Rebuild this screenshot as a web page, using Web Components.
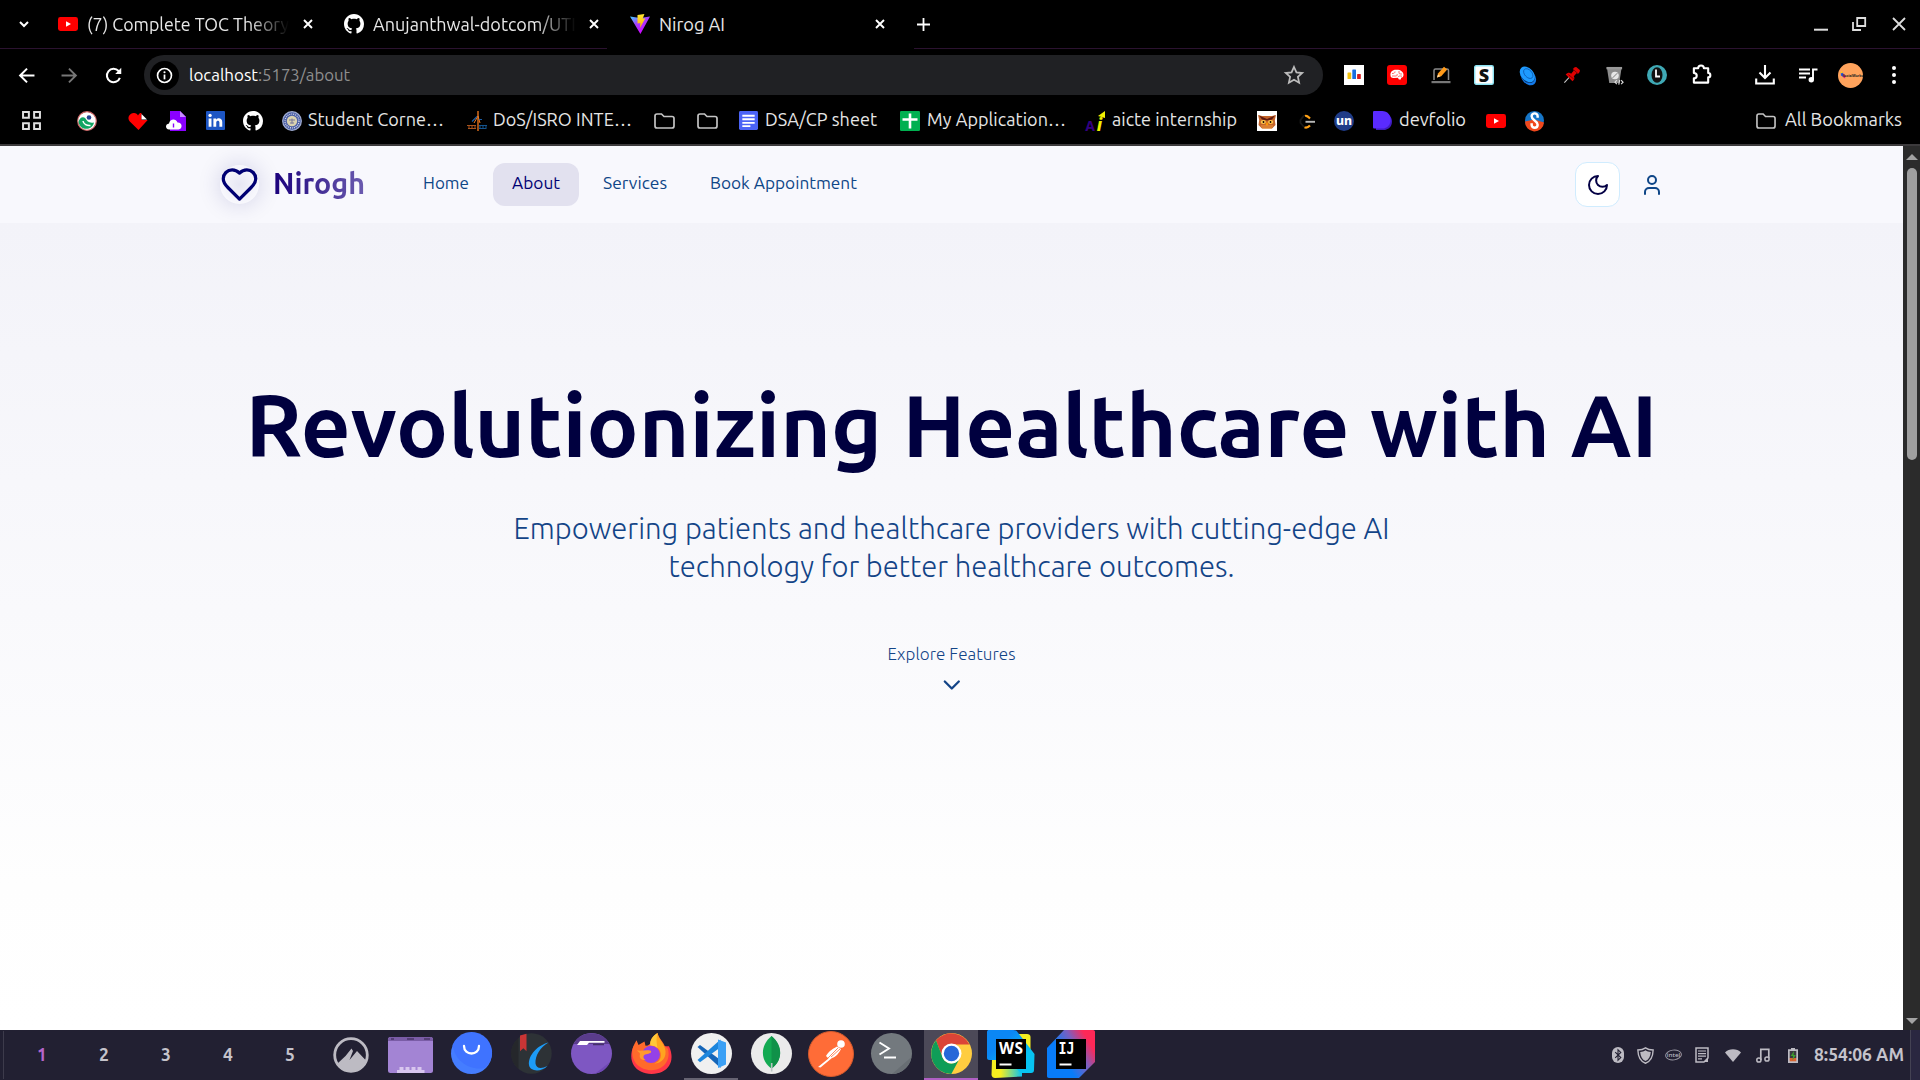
<!DOCTYPE html>
<html lang="en">
<head>
<meta charset="utf-8">
<title>Nirog AI</title>
<style>
html,body{margin:0;height:100%;overflow:hidden;background:#000}
body{font-family:Ubuntu,"Noto Sans",sans-serif}
</style>
</head>
<body>
<desk-screen></desk-screen>
<script>
const GH='<path fill="#fff" d="M8 0C3.58 0 0 3.58 0 8c0 3.54 2.29 6.53 5.47 7.59.4.07.55-.17.55-.38 0-.19-.01-.82-.01-1.49-2.01.37-2.53-.49-2.69-.94-.09-.23-.48-.94-.82-1.13-.28-.15-.68-.52-.01-.53.63-.01 1.08.58 1.23.82.72 1.21 1.87.87 2.33.66.07-.52.28-.87.51-1.07-1.78-.2-3.64-.89-3.64-3.95 0-.87.31-1.59.82-2.15-.08-.2-.36-1.02.08-2.12 0 0 .67-.21 2.2.82.64-.18 1.32-.27 2-.27s1.36.09 2 .27c1.53-1.04 2.2-.82 2.2-.82.44 1.1.16 1.92.08 2.12.51.56.82 1.27.82 2.15 0 3.07-1.87 3.75-3.65 3.95.29.25.54.73.54 1.48 0 1.07-.01 1.93-.01 2.2 0 .21.15.46.55.38A8.01 8.01 0 0 0 16 8c0-4.42-3.58-8-8-8z"/>';
const T=(x,y,s,f,t,w=700,extra='')=>`<text x="${x}" y="${y}" font-size="${s}" fill="${f}" font-weight="${w}" text-anchor="middle" style="font-family:'Noto Sans',sans-serif" ${extra}>${t}</text>`;
/* name: [viewBox, markup] */
const ICONS={
chev:['0 0 12 12','<path d="M2 4l4 4 4-4" fill="none" stroke="#fff" stroke-width="2"/>'],
yt:['0 0 20 14','<rect width="20" height="14" rx="2.4" fill="#f00"/><path d="M8 4.2v5.6L13 7z" fill="#fff"/>'],
gh:['0 0 16 16',GH],
vite:['0 0 20 20','<defs><linearGradient id="v" x1="0" y1="0" x2=".6" y2="1"><stop stop-color="#41d1ff"/><stop offset=".45" stop-color="#a340ff"/><stop offset="1" stop-color="#d400ff"/></linearGradient><linearGradient id="z" x1="0" y1="0" x2="0" y2="1"><stop stop-color="#ffea30"/><stop offset="1" stop-color="#ffa800"/></linearGradient></defs><path d="M0 2.5L10 4l10-1.5L10.4 20z" fill="url(#v)"/><path d="M7.5 1L14.4 0l-1.7 4.8 2.7-.5L9.9 14l.5-5-2.9.5z" fill="url(#z)"/>'],
x:['0 0 12 12','<path d="M2 2l8 8M10 2l-8 8" stroke="#fff" stroke-width="1.9"/>'],
plus:['0 0 13 13','<path d="M6.5 0v13M0 6.5h13" stroke="#fff" stroke-width="1.8"/>'],
min:['0 0 14 14','<path d="M0 12.7h14" stroke="#ddd" stroke-width="2"/>'],
restore:['0 0 14 14','<path d="M5.2 1h8v8h-8zM1 5v8h8" fill="none" stroke="#ddd" stroke-width="1.8"/>'],
close:['0 0 14 14','<path d="M1 1l12 12M13 1L1 13" stroke="#ddd" stroke-width="1.8"/>'],
back:['0 0 16 16','<path d="M15.5 8H2M8.5 1.5L2 8l6.500 6.500" fill="none" stroke="#fff" stroke-width="1.9"/>'],
fwd:['0 0 16 16','<path d="M.5 8H14M7.500 1.500L14 8l-6.500 6.500" fill="none" stroke="#777" stroke-width="1.800"/>'],
reload:['0 0 16 16','<path d="M14 10.200A6.300 6.300 0 1 1 12.800 3.800L14 5" fill="none" stroke="#fff" stroke-width="1.900"/><path d="M15.300.8v5.700H9.600z" fill="#fff"/>'],
info:['0 0 30 30','<circle cx="15" cy="15" r="15" fill="#000"/><circle cx="15" cy="15" r="7.200" fill="none" stroke="#fff" stroke-width="1.700"/><path d="M15 14v5" stroke="#fff" stroke-width="1.800"/><circle cx="15" cy="11.600" r="1.100" fill="#fff"/>'],
star:['0 0 18 18','<path d="M9 1.800l2.200 4.800 5.200.6-3.900 3.500 1.100 5.200L9 13.300l-4.600 2.600 1.100-5.200L1.600 7.200l5.200-.6z" fill="none" stroke="#bbb" stroke-width="1.600"/>'],
bars:['0 0 20 20','<rect width="20" height="20" fill="#fff"/><rect x="3.500" y="7.500" width="3.700" height="6.500" rx=".6" fill="#f4c20d"/><rect x="8.300" y="4.500" width="3.700" height="9.500" rx=".6" fill="#1a6fe0"/><rect x="13.100" y="9" width="3.700" height="5" rx=".6" fill="#d81b1b"/>'],
brain:['0 0 20 20','<rect width="20" height="20" rx="3" fill="#f00"/><path d="M3.500 10.300C3 7 5.500 4.600 9 4.700c4-.4 7.500 1.800 7.500 5 0 1.800-1 3-2.300 3.100l-.5 1.800h-1.800l-1-1.800-4.500.3C4.300 13 3.500 12 3.500 10.300z" fill="#fff"/><path d="M5 8.500c2 0 3-.5 3-2M5 11h4c1 0 1.500-1 1-2M12 6v2c0 1 1.500 1 3 1M11 12c1-1.200 2-1.200 4-.8" fill="none" stroke="#f44" stroke-width=".8"/>'],
laptop:['0 0 20 20','<path d="M3 15V5.500C3 4.500 3.500 4 4.500 4H16c1 0 1.500.5 1.500 1.500V15" fill="none" stroke="#8a8a8a" stroke-width="1.500"/><path d="M.5 16h19v2.200h-19z" fill="#777"/><path d="M6 12.500l1.200-4.200L13 1.800l3.200 2.700-6 6.700z" fill="#ff9a1a"/><path d="M6 12.500l1-3.300 2.300 2z" fill="#ffd9a0"/>'],
sbox:['0 0 20 20','<rect x=".7" y=".7" width="18.600" height="18.600" rx="1.500" fill="#fff" stroke="#8de3f3" stroke-width="1.400"/>'+T(10,16.500,18,'#111','S',900)],
disc:['0 0 20 20','<ellipse cx="11" cy="12" rx="9.400" ry="6.800" transform="rotate(48 11 12)" fill="#1479e8"/><ellipse cx="10" cy="9.800" rx="9.200" ry="6.600" transform="rotate(48 10 9.800)" fill="#06306b"/><ellipse cx="9.800" cy="8.800" rx="9.400" ry="6.600" transform="rotate(48 9.800 8.800)" fill="#1e9bff"/><ellipse cx="10.800" cy="8" rx="6" ry="3.800" transform="rotate(48 10.800 8)" fill="none" stroke="#0b56ad" stroke-width=".8"/>'],
pin:['0 0 20 20','<path d="M1.500 18.500l5.500-6" stroke="#ccc" stroke-width="1.200"/><path d="M3 9.500c2-2.400 4.500-2.500 6-1L12 5l-1-1.500c1-1.800 2.700-2.600 4-2.200l3.700 3.200c.4 1.600-.5 3.200-2 4L15 8l-3 3.500c1.200 2 .8 4-1.500 5.500z" fill="#e00000"/><path d="M11 3.500L16.700 8.500M6 9.500l6 5" stroke="#700" stroke-width="1"/>'],
cup:['0 0 20 20','<path d="M2 1.500h15.500L15 18H4.500z" fill="#8c8c8c"/><path d="M1.500 1h16.500v2.500H1.500z" fill="#999"/><circle cx="10.500" cy="10" r="4" fill="#e6e6e6"/><path d="M8 12.500l5-5" stroke="#777" stroke-width="1"/><path d="M12.500 15l-2 2 2 2M17 15l2 2-2 2M15.500 14.500l-1 5" stroke="#ddd" fill="none" stroke-width="1.200"/>'],
teal:['0 0 20 20','<circle cx="10" cy="10" r="10" fill="#3fa9b5"/><ellipse cx="10" cy="10" rx="5.500" ry="7.800" fill="#111"/><path d="M9 4.500v7h4" fill="none" stroke="#fff" stroke-width="1.800"/>'],
puzzle:['0 0 22 22','<path d="M3 4.500h4.500c0-4 6-4 6 0H18v5c3 0 3 4.500 0 4.500v5.500H3V15c4 0 4-5.500 0-5.500z" fill="none" stroke="#fff" stroke-width="2.200" stroke-linejoin="round"/>'],
down:['0 0 20 20','<path d="M10 0v12M4.500 7.500L10 13l5.500-5.500M1.200 13.500v5h17.600v-5" fill="none" stroke="#fff" stroke-width="2.100"/>'],
queue:['0 0 20 18','<path d="M1 3.500h11M1 7.500h11M1 11.500h7" stroke="#fff" stroke-width="1.800"/><path d="M15 13.500V3.500h4.500" fill="none" stroke="#fff" stroke-width="1.900"/><circle cx="13.300" cy="13.800" r="2.700" fill="#fff"/>'],
avatar:['0 0 26 26','<circle cx="13" cy="13" r="13" fill="#ffa35c"/><path d="M3 9.500l2.500 1v4L3 13z" fill="#2b50d8"/><path d="M5.500 11.500l2 1v3.500l-2-1z" fill="#e02080"/><rect x="3" y="9" width="1.500" height="1.500" fill="#fd0"/>'+T(15.500,14.800,3.500,'#222','SocialWorks')],
dots:['0 0 6 20','<g fill="#fff"><circle cx="3" cy="3" r="2"/><circle cx="3" cy="10" r="2"/><circle cx="3" cy="17" r="2"/></g>'],
apps:['0 0 18 18','<path d="M1 1h5.500v5.500H1zM11.500 1H17v5.500h-5.500zM1 11.500h5.500V17H1zM11.500 11.500H17V17h-5.500z" fill="none" stroke="#e0e0e0" stroke-width="1.900"/>'],
swirl:['0 0 20 20','<circle cx="10" cy="10" r="9.300" fill="#fff" stroke="#c66" stroke-width="1.200"/><path d="M1.500 11C2.500 6 6.500 5 8.500 7.500c1.500 2.500 3.500 5 8.500 4-1.500 8-13.500 9-15.500-.5z" fill="#12a562"/><path d="M6 10c.5 3.300 4 5 7.500 4.500" stroke="#fff" stroke-width="1.500" fill="none"/><circle cx="12" cy="6.500" r="2.300" fill="#25408f"/>'],
heart:['0 0 20 20','<path d="M10.500 19L1.800 10.500C-1.500 6.500 2 1.800 6 2c2 0 3.400 1.200 4 2.500C11.500 2 12.500 2 13.500 2.200V9h6.200z" fill="#f00"/><path d="M13.500 3l5.500 5.500h-5.500z" fill="#fff"/>'],
purp:['0 0 20 20','<path d="M4 0h10l6 6v14H4z" fill="#8a00ff"/><path d="M14 0l6 6h-6z" fill="#c88cff"/><path d="M3 18.500c-4-.3-4-5.500 0-6 .8-5 7-5.500 8.500-1 5-.3 5.500 6.500 1 7z" fill="#fff"/><path d="M7.500 12.500v4" stroke="#8a00ff" stroke-width="1.400"/>'],
linkedin:['0 0 18 18','<rect width="18" height="18" rx="1" fill="#1d56c4"/><path d="M2.500 7h2.700v8H2.500zM7 7h2.600v1.200c1.500-2.200 5.800-1.800 5.800 2.200V15h-2.700v-4.200c0-2.200-3-2-3 0V15H7z" fill="#fff"/><circle cx="3.850" cy="4.200" r="1.600" fill="#fff"/>'],
seal:['0 0 20 20','<circle cx="10" cy="10" r="9.300" fill="#4a5fa5" stroke="#9fabd0" stroke-width="1.300"/><circle cx="10" cy="10" r="7" fill="none" stroke="#dde" stroke-width="1.200" stroke-dasharray="1 1"/><circle cx="10" cy="10" r="5.200" fill="#d9d2b0"/><path d="M7 9h6M10 7.500v5M8 12h4" stroke="#779" stroke-width="1"/>'],
isro:['0 0 20 20','<path d="M11 0v20" stroke="#f47b20" stroke-width="1.300"/><path d="M7 12l4-7 2 7" stroke="#f47b20" stroke-width="1" fill="none"/><path d="M5 10.500l5-5M12 8.500h3" stroke="#1b5fa8" stroke-width="1.100"/><path d="M0 14.500h9M1 17.500h8M2 14v3M5 14v4M8 14v4" stroke="#a9531c" stroke-width="1"/><path d="M12 14.500h8M12 17.500h7M13 14v4M16 14v3M19 14v4" stroke="#14548e" stroke-width="1"/>'],
folder:['0 0 21 16','<path d="M1 3c0-1.200.7-2 2-2h4.500l2.500 2.500h8c1.200 0 2 .8 2 2V13c0 1.200-.8 2-2 2H3c-1.200 0-2-.8-2-2z" fill="none" stroke="#c4c4c4" stroke-width="1.700"/>'],
docs:['0 0 20 20','<rect width="20" height="20" rx="1.500" fill="#4b63f5"/><path d="M3.500 5h13M3.500 8.700h13M3.500 12.400h13M3.500 16h8.500" stroke="#fff" stroke-width="1.900"/>'],
sheet:['0 0 20 20','<rect width="20" height="20" rx="1.200" fill="#00b050"/><path d="M10 2.500v15M2.500 8.500h15" stroke="#fff" stroke-width="2.600"/>'],
ai:['0 0 20 20',T(5,19.500,14,'#330080','A')+T(14.500,19.500,17,'#f0f000','i',800,'font-style="italic"')+'<path d="M20 0v7l-7-2z" fill="#f0f000"/>'],
owl:['0 0 20 20','<rect width="20" height="20" fill="#fff"/><path d="M1 4l4 1h10l4-1-1.200 5 .7 5-3.500 3.500h-10L1.500 14l.7-5z" fill="#c4642a"/><path d="M2 4.500l8 3.500 8-3.500L15 8.500l-5 1-5-1z" fill="#5e1a10"/><ellipse cx="6.300" cy="11" rx="2.600" ry="1.900" fill="#ffc94d"/><ellipse cx="13.700" cy="11" rx="2.600" ry="1.900" fill="#ffc94d"/><circle cx="6.500" cy="11" r=".9"/><circle cx="13.500" cy="11" r=".9"/><path d="M10 10.500l1.300 3L10 15l-1.300-1.500z" fill="#f90"/><path d="M4 15h12M5 17h10" stroke="#ef9a3c" stroke-width="1"/>'],
leet:['0 0 16 16','<path d="M5 2.500L1.500 7v3L5 14" fill="none" stroke="#181818" stroke-width="1.800"/><path d="M6 3c2-1 3 .5 5 2.500" fill="none" stroke="#ffa116" stroke-width="2.200"/><path d="M5.500 14.300c2 .9 3.500.3 5.500-1.800" fill="none" stroke="#ffa116" stroke-width="2.200"/><path d="M6.500 8.800h9.500" stroke="#b8b8b8" stroke-width="1.900"/>'],
un:['0 0 20 20','<circle cx="10" cy="10" r="10" fill="#1f3c88"/>'+T(10,13.800,12.200,'#fff','un',800)],
dev:['0 0 19 20','<path d="M3 2h7c12 0 12 18 0 18H3z" fill="#3f1cc0"/><path d="M0 1.500C0 .5.500 0 1.500 0H9c11.500 0 11.500 18.500 0 18.500H1.500C.5 18.500 0 18 0 17z" fill="#5a2bff"/>'],
stud:['0 0 20 20','<circle cx="10" cy="10" r="10" fill="#1676c8"/><path d="M0 11l10-2 10 3a10 10 0 0 1-20-1z" fill="#f0481c"/><path d="M13.300 7V5.500C13.300 1.500 7 1.500 7 5.500c0 4.500 6.300 4.500 6.300 9 0 4.200-6.300 4.200-6.300 0V13" fill="none" stroke="#fff" stroke-width="2.600"/>'],
nheart:['0 0 24 24','<path d="M19 14c1.490-1.460 3-3.210 3-5.500A5.500 5.500 0 0 0 16.500 3c-1.760 0-3 .5-4.500 2-1.500-1.500-2.740-2-4.500-2A5.500 5.500 0 0 0 2 8.500c0 2.300 1.500 4.050 3 5.500l7 7Z" fill="none" stroke="#000073" stroke-width="2" stroke-linejoin="round"/>'],
moon:['0 0 24 24','<path d="M12 3a6 6 0 0 0 9 9 9 9 0 1 1-9-9Z" fill="none" stroke="#030044" stroke-width="2" stroke-linecap="round" stroke-linejoin="round"/>'],
user:['0 0 24 24','<path d="M19 21v-2a4 4 0 0 0-4-4H9a4 4 0 0 0-4 4v2" fill="none" stroke="#0f4687" stroke-width="2" stroke-linecap="round"/><circle cx="12" cy="7" r="4" fill="none" stroke="#0f4687" stroke-width="2"/>'],
cdown:['0 0 24 24','<path d="M4.800 8.500l7 7 7-7" fill="none" stroke="#134487" stroke-width="2.300" stroke-linecap="round" stroke-linejoin="round"/>'],
up:['0 0 12 6','<path d="M0 6h12L6 0z" fill="#a3a3a3"/>'],
dn:['0 0 12 6','<path d="M0 0h12L6 6z" fill="#a3a3a3"/>'],
mount:['0 0 36 36','<circle cx="18" cy="18" r="16.300" fill="none" stroke="#bdbbc3" stroke-width="2.800"/><path d="M4 27l8.500-8 6-7.500 1.500 2.500-3.500 9L24 14l9 9.500C30 36 10 38 4 27z" fill="#bdbbc3"/>'],
dock:['0 0 45 36','<rect width="45" height="36" rx="2.500" fill="#a384d4"/><path d="M0 4V2.500C0 1 1 0 2.500 0h40C44 0 45 1 45 2.500V4z" fill="#7a5ca6"/><path d="M3 2h3M19 2h7M36 2h6" stroke="#493468" stroke-width="1.500"/><path d="M9 33h27.500v3H9zM11.500 30h4v3h-4zM17.500 30h4v3h-4zM23.500 30h4v3h-4zM29.500 30h4v3h-4z" fill="#d8c6ee"/>'],
bag:['0 0 41 41','<circle cx="20.500" cy="20.500" r="20.500" fill="#457dff"/><path d="M1.500 12C4 28 18 38 34 35A20.500 20.500 0 1 0 1.500 12z" fill="#3f73ff"/><path d="M13 13c0 10 15 10 15 0" fill="none" stroke="#fff" stroke-width="2.300" stroke-linecap="round"/>'],
cal:['0 0 41 41','<circle cx="20.500" cy="20.500" r="20.200" fill="#2d3236"/><path d="M0 20.500A20.500 20.500 0 0 1 7.500 5v31A20.500 20.500 0 0 1 0 20.500z" fill="#25272b"/><path d="M9 2.500L15.500.8v17.500l-3.200-3L9 18.300z" fill="#c93535"/><path d="M37.500 9.500C27 12 17 22 18 32c.8 6.500 12 7.500 18.500 1-7 3.500-11.500 2-12-2.500C24 23 29 14 37.500 9.500z" fill="#1d9bf6"/>'],
files:['0 0 41 41','<circle cx="20.500" cy="20.500" r="20.500" fill="#7e57c2"/><path d="M2.500 11a20.500 20.500 0 0 1 36 0z" fill="#5a3c8c"/><path d="M9 8h24.500v1.800H18l-2 2.200H6z" fill="#fff"/><path d="M22 11.500h11" stroke="#46306c" stroke-width="1.500"/><path d="M24 40.700L39 29a20.500 20.500 0 0 1-15 11.700z" fill="#7048b5"/>'],
fox:['0 0 41 43','<path d="M38 14c7 16-1 29-17.500 29S-4 29 2.500 14z" fill="#ff3647"/><path d="M5.500 7.500l2 5L13.500 9l1 4.500C22 13 20 5 26.500 0c1.500 6 4.500 7.500 6.500 12 1 3 3 2.500 4 5 3 12-5 22-16.500 22S-.5 30 1.500 17c.5-3 2-6 4-9.500z" fill="#ff6a2b"/><path d="M26.500 0c-5 3-8 8-7 13 7 0 12 6 10 13-1.500 5-6 6.500-9 6 10 1 16-6 13.500-16-2-6-6.500-10-7.500-16z" fill="#ffa51f"/><path d="M26.500 0c-5 3-8 8-7 13 3 0 5.500 1 7 3-1-6-1.500-11 0-16z" fill="#ffc83a"/><circle cx="20" cy="22.500" r="9" fill="#9441e8"/><path d="M6 18c4 1.500 8-1 14 .5 1 3-3 3-6 4-3 2-1 5 1 6-6 0-7-3.500-6-6.500 0-2-2-2-3-4z" fill="#ff9a2e"/>'],
code:['0 0 41 41','<circle cx="20.500" cy="20.500" r="20.500" fill="#f0f0f0"/><path d="M6.500 14L9 12l20.500 15v8z" fill="#1565b8"/><path d="M6.500 27L9 29.200l20.500-15V6.500z" fill="#1c86dd"/><path d="M27 6.500l8 3v22l-8 3.500z" fill="#3ba0f5"/>'],
mongo:['0 0 41 41','<circle cx="20.500" cy="20.500" r="20.500" fill="#ebebeb"/><path d="M20.500 3c12 10 11 25 0 32.500C9.500 28 8.500 13 20.500 3z" fill="#13aa52"/><path d="M20.500 3c12 10 11 25 0 32.500z" fill="#109149"/><path d="M20.700 30v8.500" stroke="#b8c4c2" stroke-width="1.600"/>'],
post:['0 0 46 46','<circle cx="23" cy="23" r="22.500" fill="#ff6c37" stroke="#d65a2c" stroke-width="1"/><circle cx="33" cy="13" r="3.800" fill="#fff"/><path d="M29 15.500c-6 3-9 6-11 9.500l2.500 2.500L10 36l2.500.5L24 27c4-1 7-5 9-9z" fill="#fff"/><path d="M30 17L20 27M32 18l-9 8" stroke="#ff6c37" stroke-width=".8"/>'],
term:['0 0 41 41','<circle cx="20.500" cy="20.500" r="20.500" fill="#73797e"/><path d="M21 41L40.500 24A20.500 20.500 0 0 1 21 41z" fill="#686e73"/><path d="M8.500 9.500l9.500 6-9.500 6" fill="none" stroke="#fff" stroke-width="1.900"/><path d="M13 24.500h12" stroke="#fff" stroke-width="2"/>'],
chrome:['0 0 41 41','<circle cx="20.500" cy="20.500" r="20.500" fill="#ffcd40"/><path d="M20.500 11.500h18A20.500 20.500 0 0 0 5 7.200l6.800 18z" fill="#db4437"/><path d="M5 7.200A20.500 20.500 0 0 0 20.300 41l8.500-15.700c-5 8-14 6-17-.4z" fill="#0f9d58"/><circle cx="20.500" cy="20.500" r="10" fill="#fff"/><circle cx="20.500" cy="20.500" r="7.700" fill="#2667d8"/>'],
ws:['0 0 48 48','<defs><linearGradient id="w" x1="0" y1="0" x2="1" y2="1"><stop offset=".3" stop-color="#0b87f5"/><stop offset=".7" stop-color="#07c3f2"/></linearGradient><linearGradient id="y" x1="0" y1="0" x2="1" y2="0"><stop offset=".3" stop-color="#f5ef20"/><stop offset="1" stop-color="#07c3f2"/></linearGradient></defs><path d="M28 4h12c2 0 3.500 1 3.500 3v17H28z" fill="#f5ef20"/><path d="M5 29h30v17.500L8 48c-2 0-3-1-3.500-3z" fill="url(#y)"/><path d="M0 2C0 .5 1 0 2 0h24c3 0 4 1 6 4l15.500 20-.5 16c0 2-1 3-3 3H34L20 30H2c-1 0-2-1-2-2z" fill="url(#w)"/><path d="M9 9h30v30H9z"/><path d="M12.500 34.500h12" stroke="#fff" stroke-width="2"/>'+T(24,24.200,15.500,'#fff','WS',700,'textLength="24"')],
ij:['0 0 48 48','<defs><linearGradient id="i" x1="0" y1=".7" x2="1" y2=".1"><stop offset=".3" stop-color="#087cfa"/><stop offset=".6" stop-color="#7a5fc0"/><stop offset=".85" stop-color="#fe2857"/></linearGradient></defs><path d="M17 0h29c1.500 0 2 1 2 2v30L32 48H2c-1.300 0-2-1-2-2V18z" fill="url(#i)"/><path d="M9 9h30v30H9z"/><path d="M12.500 34.500h12" stroke="#fff" stroke-width="2"/><text x="11.500" y="24.200" font-size="15.500" font-weight="700" fill="#fff" textLength="16" lengthAdjust="spacingAndGlyphs" style="font-family:\'DejaVu Sans Mono\',monospace">IJ</text>'],
bt:['0 0 12 16','<rect width="12" height="16" rx="6" fill="#bdbbc3"/><path d="M3.200 5.200l5.600 5.400L6 13.200V2.800l2.800 2.600-5.600 5.400" fill="none" stroke="#222032" stroke-width="1.100"/>'],
shield:['0 0 16 16','<path d="M8 .8c2 1.500 4.500 2 7.200 2C15 9 13 13.500 8 15.300 3 13.500 1 9 .8 2.800c2.700 0 5.200-.5 7.200-2z" fill="none" stroke="#bdbbc3" stroke-width="1.300"/><path d="M8 3c1.500 1 3 1.500 5 1.600C12.600 9 11 12 8 13.200 5 12 3.400 9 3 4.600 5 4.500 6.500 4 8 3z" fill="#bdbbc3"/>'],
intel:['0 0 16 12','<ellipse cx="8" cy="6" rx="7.500" ry="4.900" transform="rotate(-8 8 6)" fill="none" stroke="#9c9aa5" stroke-width=".9"/>'+T(8,8.100,6,'#bdbbc3','intel',500)],
note:['0 0 14 16','<path d="M1 1h12v10l-4 4H1z" fill="none" stroke="#bdbbc3" stroke-width="1.500"/><path d="M3 4h8M3 6.600h8M3 9.200h8M3 11.800h4" stroke="#bdbbc3" stroke-width="1.200"/><path d="M13 10.500V15L9 15z" fill="#bdbbc3"/>'],
wifi:['0 0 16 13','<path d="M0 3.500C4-.8 12-.8 16 3.500L8 13z" fill="#bdbbc3"/>'],
music:['0 0 14 15','<path d="M4.800 12V1.300h8V10" fill="none" stroke="#bdbbc3" stroke-width="1.700"/><circle cx="2.900" cy="12" r="2.100" fill="none" stroke="#bdbbc3" stroke-width="1.500"/><circle cx="11" cy="11" r="2.100" fill="none" stroke="#bdbbc3" stroke-width="1.500"/>'],
batt:['0 0 10 15','<path d="M3 0h4v1.200h3V15H0V1.200h3z" fill="#bdbbc3"/><path d="M1.700 3h6.600v7H1.700z" fill="#3b3940"/><path d="M1.700 10h6.600v3.300H1.700z" fill="#d9632f"/><path d="M6 3L2.700 8H5l-.5 4.500L7.800 7H5.500z" fill="#3fa02c"/>']
};
class UiIcon extends HTMLElement{
  constructor(){super();this.attachShadow({mode:'open'})}
  connectedCallback(){
    const [vb,m]=ICONS[this.getAttribute('name')];
    const w=this.getAttribute('w'),h=this.getAttribute('h')||w;
    this.shadowRoot.innerHTML=`<style>:host{display:block;flex:none;width:${w}px;height:${h}px}svg{display:block;width:100%;height:100%;overflow:visible}</style><svg viewBox="${vb}" preserveAspectRatio="none">${m}</svg>`;
  }
}
/* One line of text, sized and lightly tracked so that it fills the width given in "w". */
class FitText extends HTMLElement{
  constructor(){super();this.attachShadow({mode:'open'});
    this.shadowRoot.innerHTML='<style>:host{display:block;flex:none;white-space:nowrap}span{display:inline-block;vertical-align:top}</style><span><slot></slot></span>'}
  connectedCallback(){
    const w=+this.getAttribute('w'),s=this.shadowRoot.querySelector('span'),n=this.textContent.length;
    this.style.width=w+'px';
    const size=parseFloat(getComputedStyle(this).fontSize);
    const nat=s.getBoundingClientRect().width;
    if(!nat)return;
    s.style.fontSize=Math.round(size*w/nat*4)/4+'px';
    s.style.letterSpacing=((w-s.getBoundingClientRect().width)/n).toFixed(3)+'px';
  }
}
/* Flow items: ['i', left gap, name, width, height?, top nudge?] or ['t', left gap, width, text, class?] */
const flow=a=>a.map(o=>o[0]=='i'
 ?`<ui-icon name="${o[2]}" w="${o[3]}" h="${o[4]||o[3]}" style="margin-left:${o[1]}px;margin-top:${o[5]||0}px"></ui-icon>`
 :`<fit-text class="${o[4]||''}" w="${o[2]}" style="margin-left:${o[1]}px">${o[3]}</fit-text>`).join('');
const def=(name,html)=>customElements.define(name,class extends HTMLElement{
  constructor(){super();this.attachShadow({mode:'open'})}
  connectedCallback(){this.shadowRoot.innerHTML=html}
});
customElements.define('ui-icon',UiIcon);
customElements.define('fit-text',FitText);

def('tab-strip',`<style>:host{display:flex;height:49px;align-items:center;background:#000;color:#e8e8e8;font-size:16.5px;line-height:24px;box-sizing:border-box;flex:none;flex-wrap:wrap;align-content:flex-start}
.row{display:flex;align-items:center;height:48px;width:1920px}
.fade{-webkit-mask-image:linear-gradient(90deg,#000 80%,transparent 100%)}
.line{display:flex;justify-content:space-between;width:1920px;height:1px}.line i{background:#2b1230;width:607px}.line i+i{width:1006px}</style>
<div class="row">${flow([['i',18,'chev',12],['i',28,'yt',20,14],['t',9,202,'(7) Complete TOC Theory','fade'],['i',13,'x',12],['i',30,'gh',20],['t',9,203,'Anujanthwal-dotcom/UTI','fade'],['i',12,'x',12],['i',30,'vite',20,20],['t',9,66,'Nirog AI'],['i',149,'x',12],['i',31,'plus',13],['i',884,'min',14],['i',24,'restore',14],['i',26,'close',14]])}</div><div class="line"><i></i><i></i></div>`);

def('tool-bar',`<style>:host{display:flex;height:52px;align-items:center;flex:none;background:#000;color:#8f8f8f;font-size:16.5px;line-height:24px}
.omni{display:flex;align-items:center;height:40px;width:1179px;border-radius:20px;background:#202124;margin-left:22px;box-sizing:border-box}.w{color:#fff}</style>
${flow([['i',18,'back',17],['i',26,'fwd',17],['i',27,'reload',17]])}
<div class="omni">${flow([['i',6,'info',29],['t',10,69,'localhost','w'],['t',0,92,':5173/about'],['i',934,'star',20]])}</div>
${flow([['i',21,'bars',20],['i',23,'brain',20],['i',24,'laptop',20],['i',23,'sbox',20],['i',24,'disc',19],['i',26,'pin',18],['i',24,'cup',19],['i',23,'teal',20],['i',24,'puzzle',21,21,-2],['i',43,'down',20],['i',23,'queue',20,18],['i',20,'avatar',25],['i',28,'dots',6,20]])}`);

def('bookmark-bar',`<style>:host{display:flex;height:45px;align-items:center;box-sizing:border-box;padding-bottom:4px;flex:none;background:#000;color:#e6e6e6;font-size:16.5px;line-height:24px;border-bottom:2px solid #3c3a3c}fit-text{margin-top:-3px}</style>
${flow([['i',22,'apps',19],['i',36,'swirl',20],['i',31,'heart',20],['i',18,'purp',20],['i',20,'linkedin',19],['i',18,'gh',20],['i',19,'seal',20],['t',6,136,'Student Corne…'],['i',23,'isro',20],['t',6,139,'DoS/ISRO INTE…'],['i',22,'folder',21,16],['i',22,'folder',21,16],['i',21,'docs',19],['t',7,112,'DSA/CP sheet'],['i',23,'sheet',20],['t',7,139,'My Application…'],['i',19,'ai',20],['t',7,125,'aicte internship'],['i',20,'owl',20],['i',22,'leet',16],['i',19,'un',20],['i',19,'dev',19],['t',7,67,'devfolio'],['i',20,'yt',20,14],['i',19,'stud',19],['i',212,'folder',20,16],['t',9,117,'All Bookmarks']])}`);

def('site-nav',`<style>:host{display:flex;align-items:center;height:77px;background:#f8f8fd;flex:none;color:#0f4687;font-size:16.3px;line-height:22px;font-weight:450;padding-left:220px;box-sizing:border-box}
fit-text{margin-top:-3px}
.logo{box-shadow:0 0 22px 2px #00007322;border-radius:50%;background:radial-gradient(#00007312,transparent 70%);margin-top:-1px}
.brand{font-size:27.5px;font-weight:600;line-height:36px;color:transparent;background:linear-gradient(90deg,#1a007b,#6c5cb0);-webkit-background-clip:text;background-clip:text}
.pill{display:flex;align-items:center;height:43px;width:86px;box-sizing:border-box;padding-left:19px;border-radius:12px;background:#e2e1ef;color:#000073;margin-left:24px}
.btn{display:flex;align-items:center;justify-content:center;box-sizing:border-box;width:45px;height:45px;border:1px solid #d0ecfe;border-radius:12px;background:#fff;margin-left:718px}</style>
<ui-icon class="logo" name="nheart" w="39"></ui-icon>
<fit-text class="brand" w="92" style="margin-left:14px">Nirogh</fit-text>
<fit-text w="46" style="margin-left:58px">Home</fit-text>
<div class="pill"><fit-text w="48">About</fit-text></div>
<fit-text w="64" style="margin-left:24px">Services</fit-text>
<fit-text w="147" style="margin-left:43px">Book Appointment</fit-text>
<div class="btn"><ui-icon name="moon" w="24"></ui-icon></div>
<ui-icon name="user" w="24" style="margin-left:20px"></ui-icon>`);

def('hero-section',`<style>:host{display:flex;flex-direction:column;align-items:center;flex:1;background:linear-gradient(#f3f3f9,#f9f9fc 48%,#fefefe 82%,#fff);color:#134487}
h1{margin:142px 0 0;font-size:88px;line-height:120px;font-weight:600;color:#00003f}
p{margin:0;font-size:28px;line-height:38px;font-weight:340;display:flex;flex-direction:column;align-items:center}
.e{font-size:16px;line-height:24px;margin:56px 0 0;font-weight:340}</style>
<h1><fit-text w="1412">Revolutionizing Healthcare with AI</fit-text></h1>
<p style="margin-top:25px"><fit-text w="876">Empowering patients and healthcare providers with cutting-edge AI</fit-text><fit-text w="566">technology for better healthcare outcomes.</fit-text></p>
<fit-text class="e" w="128">Explore Features</fit-text><ui-icon name="cdown" w="24" style="margin-top:7px"></ui-icon>`);

def('scroll-bar',`<style>:host{display:flex;flex-direction:column;align-items:center;width:17px;background:#2b2b2b;flex:none}
i{width:10px;height:292px;border-radius:5px;background:#9f9f9f;margin:8px 0 auto 1px}</style><ui-icon name="up" w="12" h="6" style="margin-top:8px"></ui-icon><i></i><ui-icon name="dn" w="12" h="6" style="margin-bottom:6px"></ui-icon>`);

def('task-bar',`<style>:host{display:flex;align-items:center;height:50px;background:#222032;flex:none;color:#c5c3cb;font-size:16.5px;line-height:24px;font-weight:600}
.edge{width:1px;height:48px;background:#3d3b4b;margin-left:3px}
.ws{display:flex;margin-left:7px;font-size:17.500px}.ws b{width:62px;text-align:center;font-weight:600}.ws b:first-child{color:#b565cb}
.app{display:flex;align-items:center;justify-content:center;width:54px;height:50px;margin-left:6px;box-sizing:border-box;padding-bottom:3px;flex:none}
.run{background:linear-gradient(#666372,#666372) bottom/100% 2px no-repeat}
.on{background:linear-gradient(#b060c4,#b060c4) bottom/100% 2px no-repeat #4c4958}
.end{width:9px;height:50px;background:#2a2740;border-left:1px solid #444253;margin-left:6px}</style>
<div class="edge"></div><div class="ws"><b>1</b><b>2</b><b>3</b><b>4</b><b>5</b></div>
<div class="app" style="margin-left:3px;padding:0"><ui-icon name="mount" w="36"></ui-icon></div><div class="app" style="margin-left:5px;padding:0"><ui-icon name="dock" w="45" h="36"></ui-icon></div><div style="width:1px"></div>
${['bag','cal','files','fox','code','mongo','post','term','chrome','ws','ij'].map(n=>{const w={post:46,ws:48,ij:48}[n]||41;return `<div class="app ${n=='code'?'run':n=='chrome'?'on':''}"><ui-icon name="${n}" w="${w}"></ui-icon></div>`}).join('')}
${flow([['i',514,'bt',12,16],['i',13,'shield',17],['i',11,'intel',17,12],['i',13,'note',14,16],['i',16,'wifi',16,13],['i',15,'music',14,15],['i',18,'batt',10,15],['t',16,90,'8:54:06 AM']])}<div class="end"></div>`);

def('desk-screen',`<style>:host{display:flex;flex-direction:column;width:1920px;height:1080px;background:#000}
.view{display:flex;flex:1;min-height:0}.page{display:flex;flex-direction:column;flex:1}</style>
<tab-strip></tab-strip><tool-bar></tool-bar><bookmark-bar></bookmark-bar>
<div class="view"><div class="page"><site-nav></site-nav><hero-section></hero-section></div><scroll-bar></scroll-bar></div><task-bar></task-bar>`);
</script>
</body>
</html>
